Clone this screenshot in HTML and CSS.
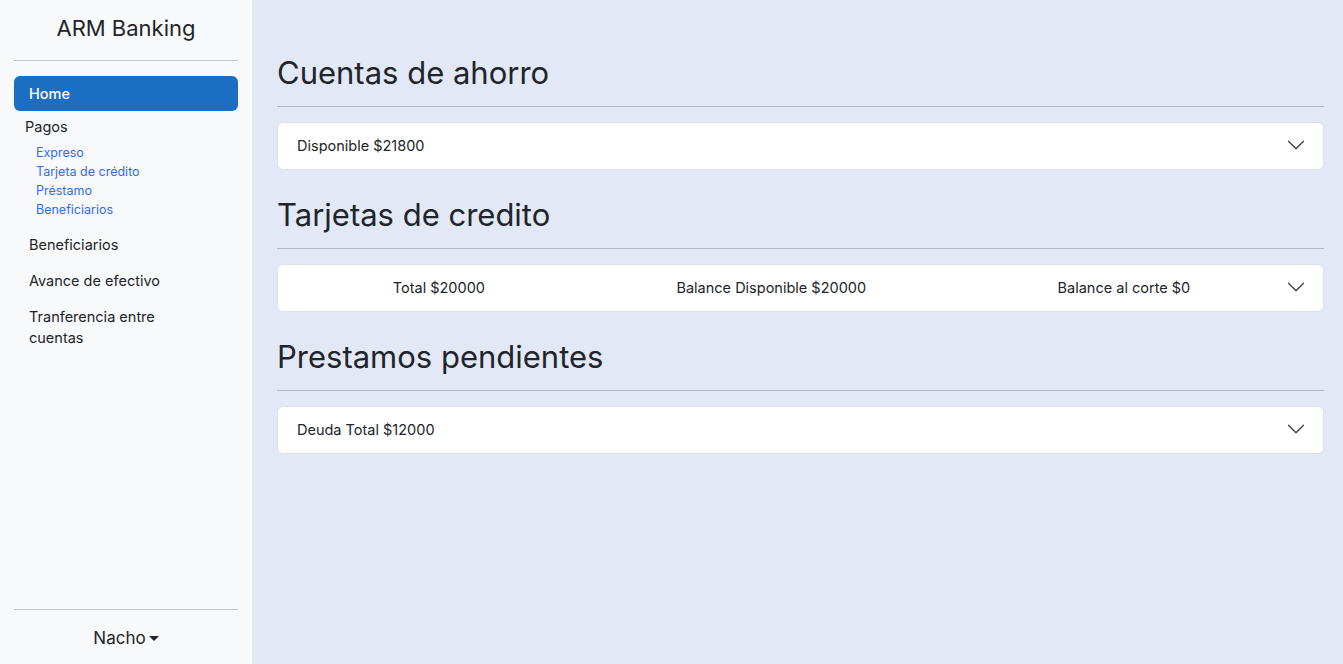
FILE: index.html
```html
<!DOCTYPE html>
<html lang="es">
<head>
<meta charset="utf-8">
<title>ARM Banking</title>
<link rel="stylesheet" href="styles.css">
</head>
<body>
<div class="app">
  <aside class="sidebar">
    <div class="brand">ARM Banking</div>
    <hr class="side-rule">
    <nav class="nav">
      <a class="nav-link active" href="#">Home</a>
      <div class="nav-group">
        <span class="group-title">Pagos</span>
        <a class="sub-link" href="#">Expreso</a>
        <a class="sub-link" href="#">Tarjeta de crédito</a>
        <a class="sub-link" href="#">Préstamo</a>
        <a class="sub-link" href="#">Beneficiarios</a>
      </div>
      <a class="nav-link" href="#">Beneficiarios</a>
      <a class="nav-link" href="#">Avance de efectivo</a>
      <a class="nav-link" href="#">Tranferencia entre cuentas</a>
    </nav>
    <div class="side-footer">
      <hr class="side-rule">
      <div class="user">Nacho<span class="caret"></span></div>
    </div>
  </aside>
  <main class="content">
    <section class="block">
      <h2 class="block-title">Cuentas de ahorro</h2>
      <hr class="block-rule">
      <div class="card">
        <div class="card-text">Disponible $21800</div>
        <svg class="chev" viewBox="0 0 16 16" width="20" height="20"><path fill="#3a3d42" d="M1.646 4.646a.5.5 0 0 1 .708 0L8 10.293l5.646-5.647a.5.5 0 0 1 .708.708l-6 6a.5.5 0 0 1-.708 0l-6-6a.5.5 0 0 1 0-.708z"/></svg>
      </div>
    </section>
    <section class="block">
      <h2 class="block-title">Tarjetas de credito</h2>
      <hr class="block-rule">
      <div class="card">
        <div class="card-text spread">
          <span>Total $20000</span>
          <span>Balance Disponible $20000</span>
          <span>Balance al corte $0</span>
        </div>
        <svg class="chev" viewBox="0 0 16 16" width="20" height="20"><path fill="#3a3d42" d="M1.646 4.646a.5.5 0 0 1 .708 0L8 10.293l5.646-5.647a.5.5 0 0 1 .708.708l-6 6a.5.5 0 0 1-.708 0l-6-6a.5.5 0 0 1 0-.708z"/></svg>
      </div>
    </section>
    <section class="block">
      <h2 class="block-title">Prestamos pendientes</h2>
      <hr class="block-rule">
      <div class="card">
        <div class="card-text">Deuda Total $12000</div>
        <svg class="chev" viewBox="0 0 16 16" width="20" height="20"><path fill="#3a3d42" d="M1.646 4.646a.5.5 0 0 1 .708 0L8 10.293l5.646-5.647a.5.5 0 0 1 .708.708l-6 6a.5.5 0 0 1-.708 0l-6-6a.5.5 0 0 1 0-.708z"/></svg>
      </div>
    </section>
  </main>
</div>
</body>
</html>
```
FILE: styles.css
```css
* { box-sizing: border-box; }
html, body { margin: 0; height: 100%; }
body {
  font-family: "Inter", "Open Sans", sans-serif;
  color: #212529;
  font-size: 14.5px;
}
a { text-decoration: none; }
.app { display: flex; height: 100vh; }

.sidebar {
  width: 252px;
  flex-shrink: 0;
  background: #f8f9fb;
  display: flex;
  flex-direction: column;
  padding: 0 14px;
}
.brand {
  font-size: 22px;
  text-align: center;
  height: 60px;
  line-height: 57px;
  color: #212529;
}
.side-rule {
  border: 0;
  border-top: 1px solid #c4c5c8;
  margin: 0;
}
.nav { display: flex; flex-direction: column; padding-top: 15px; }
.nav-link {
  display: block;
  color: #212529;
  font-size: 14.5px;
  line-height: 21px;
  padding: 7px 60px 7px 15px;
  border-radius: 6px;
  margin-bottom: 1px;
}
.nav-link.active {
  background: #1c6ec3;
  color: #fff;
  font-weight: 500;
}
.nav-group { display: flex; flex-direction: column; padding: 4px 11px 8px; }
.group-title { font-size: 14.5px; line-height: 21px; margin-bottom: 6px; }
.sub-link {
  color: #2f6df0;
  font-size: 12.5px;
  line-height: 19px;
  padding-left: 11px;
}
.side-footer { margin-top: auto; }
.user {
  text-align: center;
  font-size: 17px;
  height: 54px;
  line-height: 56px;
  color: #212529;
}
.caret {
  display: inline-block;
  margin-left: 3px;
  vertical-align: 3px;
  border-top: 5px solid #212529;
  border-left: 5px solid transparent;
  border-right: 5px solid transparent;
}

.content {
  flex: 1;
  background: #e2e8f5;
  padding: 54px 19px 0 25px;
}
.block { margin-bottom: 26px; }
.block-title {
  font-size: 31px;
  font-weight: 400;
  line-height: 38px;
  margin: 0 0 14px;
  color: #212529;
}
.block-rule {
  border: 0;
  border-top: 1px solid #b4b6c4;
  margin: 0 0 15px;
}
.card {
  background: #fff;
  border: 1px solid #dde1ea;
  border-radius: 6px;
  display: flex;
  align-items: center;
  padding: 11px 17px 13px 19px;
  height: 48px;
}
.card-text { flex: 1; font-size: 14.5px; line-height: 21px; }
.spread { display: flex; justify-content: space-around; }
.chev { flex-shrink: 0; margin-left: auto; }
```
